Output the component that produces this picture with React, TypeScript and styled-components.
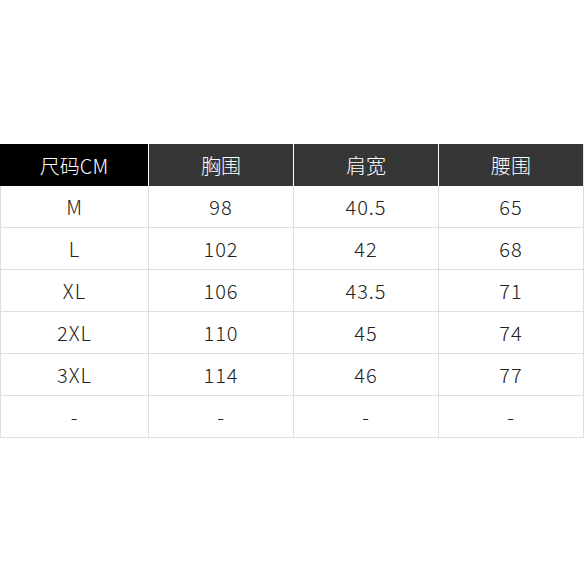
import React from 'react'
import styled, { createGlobalStyle } from 'styled-components'

const GlobalStyle = createGlobalStyle`
  html, body {
    margin: 0;
    padding: 0;
    background: #fff;
  }
  * {
    box-sizing: border-box;
  }
`

const Page = styled.div`
  width: 584px;
  height: 584px;
  padding-top: 144px;
  font-family: 'Noto Sans CJK SC', 'Noto Sans', sans-serif;
`

const Row = styled.div`
  display: grid;
  grid-template-columns: 149px 145px 145px 145px;
  height: 42px;
`

const HeadCell = styled.div<{ $first?: boolean }>`
  display: flex;
  align-items: center;
  justify-content: center;
  background: ${(p) => (p.$first ? '#000' : '#363636')};
  border-right: 1px solid #fff;
  color: #fff;
  font-size: 20px;
  font-weight: 300;

  &:last-child {
    border-right: 1px solid #e6e6e6;
  }
`

const Cell = styled.div`
  display: flex;
  align-items: center;
  justify-content: center;
  border-right: 1px solid #dedede;
  border-bottom: 1px solid #dedede;
  color: #222;
  font-size: 20px;
  font-weight: 300;
  letter-spacing: 1px;

  &:first-child {
    border-left: 1px solid #dedede;
  }
`

const headers = ['尺码CM', '胸围', '肩宽', '腰围']

const rows = [
  ['M', '98', '40.5', '65'],
  ['L', '102', '42', '68'],
  ['XL', '106', '43.5', '71'],
  ['2XL', '110', '45', '74'],
  ['3XL', '114', '46', '77'],
  ['-', '-', '-', '-'],
]

const App = () => {
  return (
    <>
      <GlobalStyle />
      <Page>
        <Row>
          {headers.map((h, i) => (
            <HeadCell key={h} $first={i === 0}>
              {h}
            </HeadCell>
          ))}
        </Row>
        {rows.map((r, i) => (
          <Row key={i}>
            {r.map((v, j) => (
              <Cell key={j}>{v}</Cell>
            ))}
          </Row>
        ))}
      </Page>
    </>
  )
}

export default App
